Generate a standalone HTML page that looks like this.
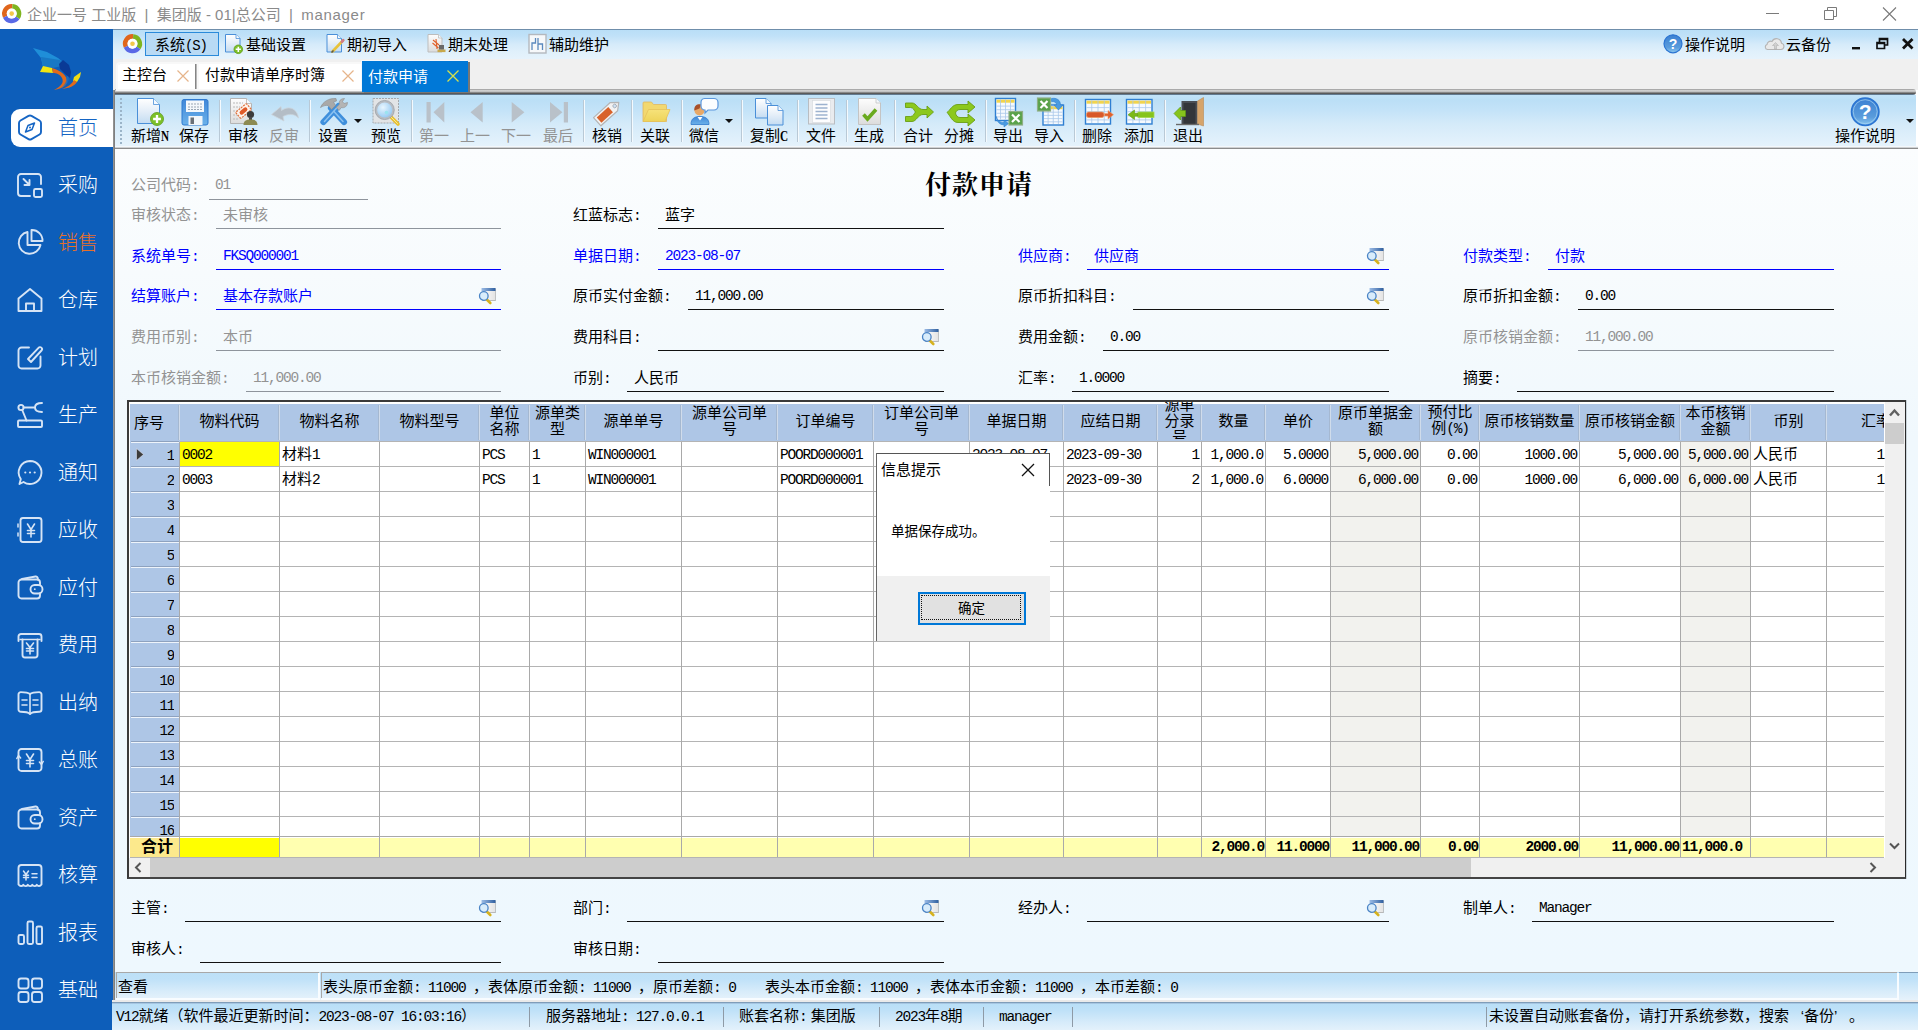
<!DOCTYPE html><html lang="zh-CN"><head><meta charset="utf-8"><title>付款申请</title><style>
html,body{margin:0;padding:0}
body{width:1918px;height:1030px;position:relative;overflow:hidden;background:#fff;font-family:"Liberation Sans","Noto Sans CJK SC",sans-serif;font-size:15px;color:#000}
.a{position:absolute}
.t{position:absolute;white-space:nowrap;line-height:15px;height:15px}
.n{font-family:"Liberation Mono","Noto Sans CJK SC",monospace;font-size:14.5px;letter-spacing:-1.2px}
.g{color:#939393}
.b{color:#0000ff}
.ul{position:absolute;height:0;border-top:1px solid #111}
.ul.b{border-color:#0000ff}
.ul.g{border-color:#8e949c}
.sb{position:absolute;left:58px;font-size:20px;font-weight:300;line-height:24px;color:#fff;white-space:nowrap}
.hd{position:absolute;top:402px;height:37px;text-align:center;line-height:16px;font-size:15px;overflow:hidden;display:flex;align-items:center;justify-content:center}
.c{position:absolute;white-space:nowrap;line-height:15px;font-size:15px}
.vl{position:absolute;width:1px;background:#a9a9a9}
.hl{position:absolute;height:1px;background:#b4b4b4}
.tl{position:absolute;white-space:nowrap;line-height:15px;top:128px}
.sep{position:absolute;top:100px;width:1px;height:42px;background:#b9c9d6;border-right:1px solid #f4fafe}
</style></head><body><div class="a" style="left:0;top:0;width:1918px;height:30px;background:#fff"></div><svg class="a" style="left:0;top:0" width="30" height="30" viewBox="0 0 30 30"><path d="M5.09 16.68A7.296 7.296 0 0 1 12.34 6.33" stroke="#e0661c" stroke-width="4.608" fill="none"/><path d="M12.34 6.33A7.296 7.296 0 0 1 17.68 17.78" stroke="#7fb51f" stroke-width="4.608" fill="none"/><path d="M17.68 17.78A7.296 7.296 0 0 1 5.09 16.68" stroke="#5a69e6" stroke-width="4.608" fill="none"/><circle cx="11.7" cy="13.6" r="4.992" fill="#fff"/><circle cx="11.7" cy="13.6" r="2.304" fill="#f2c84a"/></svg><div class="t " style="left:27px;top:7px;color:#8a8a8a;font-size:15px;line-height:16px">企业一号 工业版&nbsp; |&nbsp; 集团版 - 01|总公司&nbsp; |&nbsp; <span style="letter-spacing:0.7px">manager</span></div><svg class="a" style="left:1740px;top:0" width="178" height="30" viewBox="1740 0 178 30" fill="none" stroke="#7a7a7a" stroke-width="1"><path d="M1766 13.5H1779"/><path d="M1824.5 10.5H1833.5V19.5H1824.5ZM1827.5 10.5V7.5H1836.5V16.5H1833.5"/><path d="M1883 7.5L1896 20.5M1896 7.5L1883 20.5" stroke-width="1.1"/></svg><div class="a" style="left:0;top:29px;width:113px;height:1001px;background:#0d5eba"></div><div class="a" style="left:113px;top:90px;width:2px;height:911px;background:linear-gradient(90deg,#9a9a9a,#777)"></div><div class="a" style="left:11px;top:109px;width:102px;height:38px;background:#fff;border-radius:9px 0 0 9px"></div><div class="sb" style="top:115.5px;color:#1565c4">首页</div><div class="sb" style="top:173px;color:#fff">采购</div><div class="sb" style="top:230.5px;color:#e8702a">销售</div><div class="sb" style="top:288px;color:#fff">仓库</div><div class="sb" style="top:345.5px;color:#fff">计划</div><div class="sb" style="top:403px;color:#fff">生产</div><div class="sb" style="top:460.5px;color:#fff">通知</div><div class="sb" style="top:518px;color:#fff">应收</div><div class="sb" style="top:575.5px;color:#fff">应付</div><div class="sb" style="top:633px;color:#fff">费用</div><div class="sb" style="top:690.5px;color:#fff">出纳</div><div class="sb" style="top:748px;color:#fff">总账</div><div class="sb" style="top:805.5px;color:#fff">资产</div><div class="sb" style="top:863px;color:#fff">核算</div><div class="sb" style="top:920.5px;color:#fff">报表</div><div class="sb" style="top:978px;color:#fff">基础</div><svg class="a" style="left:0;top:30px" width="113" height="1000" viewBox="0 30 113 1000" fill="none" stroke="#d6e4f5" stroke-width="1.9" stroke-linecap="round" stroke-linejoin="round"><g stroke="none"><path d="M33 48L47 52L58 58L63 62L58 66L53 67L43 67L41 58Z" fill="#1f8ed8"/><path d="M41 57L60 60L66 65L53 68L43 67Z" fill="#1878c4"/><path d="M59 64L63 60L69 65L71 72L70 78L65 74L60 69Z" fill="#0a3a96"/><path d="M43 66L52 68L53 73L40 72Z" fill="#f2e612"/><path d="M52 68C60 70 68 76 67 82C66 87 60 89 54 90C62 86 64 82 62 78C60 74 56 73 53 73Z" fill="#e06a1c"/><path d="M81 72L74 77L73 81L77 82L80 77Z" fill="#f0dc14"/><path d="M74 80L77 82C74 86 70 88 62 89C68 87 72 84 74 80Z" fill="#e06a1c"/><path d="M68 76C70 80 68 85 60 89C66 84 67 80 66 77Z" fill="#1e6ec0" opacity="0.8"/></g><g transform="translate(16,113.5)" stroke="#1565c4"><path d="M12.5 2.4a3 3 0 0 1 3 0l8 4.6a3 3 0 0 1 1.5 2.6v8.8a3 3 0 0 1-1.5 2.6l-8 4.6a3 3 0 0 1-3 0l-8-4.6a3 3 0 0 1-1.5-2.6V9.6a3 3 0 0 1 1.5-2.6Z"/><path d="M9.5 18.5L12 12L18.5 9.5L16 16Z" stroke-width="1.5"/><circle cx="14" cy="14" r="1" fill="#1565c4" stroke="none"/></g><g transform="translate(16,171)"><path d="M25 13V6a3 3 0 0 0-3-3H5a3 3 0 0 0-3 3v16a3 3 0 0 0 3 3h9"/><rect x="18" y="18" width="8" height="8" rx="1.5"/><path d="M7.5 8L13.5 14M13.5 9V14H8.5"/></g><g transform="translate(16,228.5)"><path d="M11.5 3.5A11 11 0 1 0 24.5 16.5H11.5Z"/><path d="M15.5 1.5A10.5 10.5 0 0 1 26.5 12.5H15.5Z"/></g><g transform="translate(16,286)"><path d="M2.5 12.5L14 3L25.5 12.5V25H2.5Z"/><path d="M10 25V17.5H18V25"/></g><g transform="translate(16,343.5)"><path d="M13 4H5.5a3 3 0 0 0-3 3V22a3 3 0 0 0 3 3H21.5a3 3 0 0 0 3-3V13"/><path d="M12 15.5L22.5 4.3a2 2 0 0 1 3 2.7L15 18.5Z"/></g><g transform="translate(16,401)"><rect x="2" y="19.5" width="24" height="6.5" rx="1"/><circle cx="5" cy="6.5" r="2.6"/><path d="M6.2 9L10.5 19.5M7.6 6.5H18.5M26 2C21.5 2 19 4 19 6.5C19 9 21.5 11 26 11"/></g><g transform="translate(16,458.5)"><path d="M14 2.5a11.5 11.5 0 1 1-6.5 21L3.5 25.5L4.8 20.6A11.5 11.5 0 0 1 14 2.5Z"/><g fill="#d6e4f5" stroke="none"><circle cx="9.3" cy="14" r="1.1"/><circle cx="14" cy="14" r="1.1"/><circle cx="18.7" cy="14" r="1.1"/></g></g><g transform="translate(16,516)"><rect x="4.5" y="2" width="21" height="24" rx="2.5"/><path d="M2 8V11M2 17V20" stroke-width="1.5"/><g transform="translate(1,0)"><path d="M10.5 8L14 13.5L17.5 8M14 13.5V21M10.5 14.5H17.5M10.5 17.5H17.5" stroke-width="1.6"/></g></g><g transform="translate(16,573.5)"><path d="M24 11V9a3 3 0 0 0-3-3H5.5a3 3 0 0 0-3 3V22a3 3 0 0 0 3 3H21a3 3 0 0 0 3-3V20"/><path d="M6 5.5L19.5 3a2 2 0 0 1 2.3 2V6"/><rect x="14.5" y="11.5" width="12" height="8.5" rx="4.2"/><circle cx="18.8" cy="15.7" r="0.9" fill="#d6e4f5" stroke="none"/></g><g transform="translate(16,631)"><path d="M2.5 10V5.5a2.5 2.5 0 0 1 2.5-2.5H23a2.5 2.5 0 0 1 2.5 2.5V10"/><path d="M6.5 8.5V24a2.5 2.5 0 0 0 2.5 2.5H19a2.5 2.5 0 0 0 2.5-2.5V8.5"/><path d="M4 8.5H24" stroke-width="1.4"/><path d="M10.5 12L14 16.5L17.5 12M14 16.5V23M10.5 17.5H17.5M10.5 20H17.5" stroke-width="1.6"/></g><g transform="translate(16,688.5)"><path d="M14 5.5C12 3.8 8 3.6 4.8 3.6A2.3 2.3 0 0 0 2.5 6V21a2.3 2.3 0 0 0 2.3 2.3C8 23.3 12 23.5 14 25.5C16 23.500 20 23.300 23.200 23.300A2.300 2.300 0 0 0 25.500 21V6a2.300 2.300 0 0 0-2.300-2.400C20 3.600 16 3.800 14 5.500Z"/><path d="M14 5.500V25M6 11.500H11M6 16.500H11M17 11.500H22M17 16.500H22" stroke-width="1.600"/></g><g transform="translate(16,746)"><path d="M2.500 11V6a3 3 0 0 1 3-3H22.500a3 3 0 0 1 3 3V19M25.500 17V22a3 3 0 0 1-3 3H5.500a3 3 0 0 1-3-3V9"/><path d="M0.800 12.500L2.500 9.500L4.600 12M23.400 16L25.500 18.500L27.200 15.500" stroke-width="1.500"/><path d="M10.5 8L14 13.5L17.5 8M14 13.5V21M10.5 14.5H17.5M10.5 17.5H17.5" stroke-width="1.6"/></g><g transform="translate(16,803.5)"><path d="M24 11V9a3 3 0 0 0-3-3H5.5a3 3 0 0 0-3 3V22a3 3 0 0 0 3 3H21a3 3 0 0 0 3-3V20"/><path d="M6 5.5L19.5 3a2 2 0 0 1 2.3 2V6"/><rect x="14.5" y="11.5" width="12" height="8.5" rx="4.2"/><circle cx="18.8" cy="15.7" r="0.9" fill="#d6e4f5" stroke="none"/></g><g transform="translate(16,861)"><path d="M2.500 23.500V7a3 3 0 0 1 3-3H22.500a3 3 0 0 1 3 3V23.500C24 25.500 22 25.500 20.800 23.800C19.500 25.500 17.500 25.500 16.300 23.800C15 25.500 13 25.500 11.800 23.800C10.500 25.500 8.500 25.500 7.300 23.800C6 25.500 4 25.500 2.500 23.500Z"/><path d="M7.500 10L10 13.500L12.500 10M10 13.500V19M7.500 14.200H12.500M7.500 16.600H12.500M16 12.800H21M16 16.400H21" stroke-width="1.500"/></g><g transform="translate(16,918.5)"><rect x="2.500" y="16.500" width="5.500" height="9" rx="1.500"/><rect x="11.500" y="3" width="5.500" height="22.500" rx="1.500"/><rect x="20.500" y="8" width="5.500" height="17.500" rx="1.500"/></g><g transform="translate(16,976)"><rect x="2.500" y="2.500" width="10" height="10" rx="2.500"/><rect x="16" y="2.500" width="10" height="10" rx="2.500"/><rect x="2.500" y="16" width="10" height="10" rx="2.500"/><rect x="16" y="16" width="10" height="10" rx="2.500"/></g></svg><div class="a" style="left:113px;top:29px;width:1805px;height:1px;background:#6f8eab"></div><div class="a" style="left:113px;top:30px;width:1805px;height:29px;background:linear-gradient(180deg,#b9def7 0,#c0e1f8 20%,#d6ebfa 50%,#e0f0fb 75%,#e6f3fc 100%)"></div><div class="a" style="left:145px;top:32px;width:72px;height:22px;background:#b8daf5;border:1px solid #2a8ada"></div><div class="t " style="left:155px;top:37px;">系统<span class="n" style="font-size:14px">(S)</span></div><div class="t " style="left:246px;top:37px;">基础设置</div><div class="t " style="left:347px;top:37px;">期初导入</div><div class="t " style="left:448px;top:37px;">期末处理</div><div class="t " style="left:549px;top:37px;">辅助维护</div><div class="t " style="left:1685px;top:37px;">操作说明</div><div class="t " style="left:1786px;top:37px;">云备份</div><svg class="a" style="left:115px;top:30px" width="1803" height="30" viewBox="115 30 1803 30"><path d="M125.89 46.78A7.296 7.296 0 0 1 133.14 36.43" stroke="#e0661c" stroke-width="4.608" fill="none"/><path d="M133.14 36.43A7.296 7.296 0 0 1 138.48 47.88" stroke="#7fb51f" stroke-width="4.608" fill="none"/><path d="M138.48 47.88A7.296 7.296 0 0 1 125.89 46.78" stroke="#5a69e6" stroke-width="4.608" fill="none"/><circle cx="132.5" cy="43.7" r="4.992" fill="#fff"/><circle cx="132.5" cy="43.7" r="2.304" fill="#f2c84a"/><path d="M225.5 34.5H236L240 38.5V52H225.5Z" fill="url(#pg)" stroke="#4a8fd8" stroke-width="1"/><path d="M236 34.5V38.5H240" fill="#f4f9fe" stroke="#4a8fd8" stroke-width="0.8"/><circle cx="238.3" cy="49.3" r="4.3" fill="#7cc028" stroke="#5e9a1a" stroke-width="0.8"/><path d="M235.72 49.3H240.88M238.3 46.72V51.88" stroke="#fff" stroke-width="1.548"/><path d="M327 34.5H337.5L341.5 38.5V52H327Z" fill="url(#pg)" stroke="#4a8fd8" stroke-width="1"/><path d="M337.5 34.5V38.5H341.5" fill="#f4f9fe" stroke="#4a8fd8" stroke-width="0.8"/><path d="M332.500 51.500L343 40.500" stroke="#e8c23a" stroke-width="2.600" stroke-linecap="round"/><path d="M341.800 41.800L343.300 40.200" stroke="#d07a8a" stroke-width="2.600" stroke-linecap="round"/><path d="M331.500 52.500L333.500 50.500" stroke="#555" stroke-width="1.400"/><path d="M428 34.5H438.5L442 38V52H428Z" fill="url(#gy)" stroke="#bdbdbd" stroke-width="1"/><path d="M438.5 34.5V38H442" fill="#f4f9fe" stroke="#bdbdbd" stroke-width="0.8"/><path d="M433 40L439 45M432.500 43L438.500 48M436 39L437 49" stroke="#e0602a" stroke-width="1.100"/><rect x="437.500" y="49.500" width="8" height="2.600" fill="#c8a84a"/><rect x="439" y="45" width="5" height="4.500" fill="#6a6a6a"/><rect x="529" y="34.500" width="17" height="18.500" fill="#f6f8fa" stroke="#b4b8be" stroke-width="1.400"/><path d="M532 50V43H535.500V38M538 50V38M538 44H542.500V50" stroke="#5a88be" stroke-width="1.300" fill="none"/><circle cx="1673" cy="43.800" r="9" fill="url(#hp)" stroke="#2a74d2" stroke-width="1.200"/><text x="1673" y="48.800" text-anchor="middle" font-family="Liberation Sans,sans-serif" font-weight="bold" font-size="14" fill="#fff">?</text><path d="M1767.500 49.500H1781a3.200 3.200 0 0 0 0.500-6.300A5 5 0 0 0 1772 41.500A3.500 3.500 0 0 0 1767 44.500A2.600 2.600 0 0 0 1767.500 49.500Z" fill="#e9e9e9" stroke="#b4b4b4" stroke-width="1.100"/><path d="M1774.500 49V45.500H1772.500L1775.500 42.500L1778.500 45.500H1776.500V49Z" fill="#d0d0d0" stroke="#aaa" stroke-width="0.500"/><rect x="1852" y="47" width="8" height="2.400" fill="#111"/><path d="M1877 42.500H1884.500V48.500H1877ZM1879.500 42.500V38.500H1887.500V45H1884.500" fill="none" stroke="#111" stroke-width="1.700"/><path d="M1879.500 39.200H1887.500M1877 43.200H1884.500" stroke="#111" stroke-width="2.200"/><path d="M1903 39L1912.500 48.500M1912.500 39L1903 48.500" stroke="#111" stroke-width="2.800"/></svg><div class="a" style="left:113px;top:59px;width:1805px;height:31px;background:#f0f0f0"></div><div class="a" style="left:115px;top:89px;width:1801px;height:6px;border-radius:0 3px 3px 0;background:linear-gradient(180deg,#aaa 0,#aaa 16%,#d2d2d2 17%,#c8c8c8 40%,#8a8a8a 58%,#5a5a5a 75%,#5c6e7e 84%,#6a87a2 100%)"></div><div class="a" style="left:118px;top:64px;width:77px;height:25px;background:#fff;box-shadow:1px 0 0 #858585,2px 0 0 #b8b8b8,0 0 0 2px #f8f8f8;border-radius:2px 0 0 0"></div><div class="a" style="left:199px;top:64px;width:162px;height:25px;background:#fff;box-shadow:0 0 0 2px #f8f8f8"></div><div class="a" style="left:362px;top:61px;width:106px;height:31px;background:#0078d7;box-shadow:2px 1px 0 #777,-1px -1px 0 #f4f8fc"></div><div class="t " style="left:122px;top:67px;">主控台</div><div class="t " style="left:205px;top:67px;">付款申请单序时簿</div><div class="t " style="left:368px;top:68.5px;color:#fff">付款申请</div><svg class="a" style="left:177px;top:70px" width="12" height="12" viewBox="0 0 12 12"><path d="M0.5 0.5L11.5 11.5M11.5 0.5L0.5 11.5" stroke="#e6b48a" stroke-width="1.2" fill="none"/></svg><svg class="a" style="left:342px;top:70px" width="12" height="12" viewBox="0 0 12 12"><path d="M0.5 0.5L11.5 11.5M11.5 0.5L0.5 11.5" stroke="#e6b48a" stroke-width="1.2" fill="none"/></svg><svg class="a" style="left:447px;top:70px" width="12" height="12" viewBox="0 0 12 12"><path d="M0.5 0.5L11.5 11.5M11.5 0.5L0.5 11.5" stroke="#d6e24a" stroke-width="1.3" fill="none"/></svg><div class="a" style="left:115px;top:95px;width:1801px;height:52px;background:linear-gradient(180deg,#c2e3f8 0,#bbdff6 10%,#c4e3f8 30%,#d4eaf9 55%,#e6f3fc 100%)"></div><div class="a" style="left:115px;top:146px;width:1803px;height:3px;background:linear-gradient(180deg,#f4f8fb 0,#f4f8fb 40%,#8c8c8c 67%,#8c8c8c 100%)"></div><div class="a" style="left:120px;top:98px;width:2px;height:46px;background:repeating-linear-gradient(180deg,#9bb4c8 0 2px,transparent 2px 4px)"></div><div class="tl" style="left:131px">新增<span style="font-family:\'Liberation Serif\',serif;font-weight:bold;font-size:14px;display:inline-block;transform:scaleX(0.8);transform-origin:left;margin-right:-3px">N</span></div><div class="tl" style="left:179px">保存</div><div class="tl" style="left:228px">审核</div><div class="tl g" style="left:269px">反审</div><div class="tl" style="left:318px">设置</div><div class="tl" style="left:371px">预览</div><div class="tl g" style="left:419px">第一</div><div class="tl g" style="left:460px">上一</div><div class="tl g" style="left:501px">下一</div><div class="tl g" style="left:543px">最后</div><div class="tl" style="left:592px">核销</div><div class="tl" style="left:640px">关联</div><div class="tl" style="left:689px">微信</div><div class="tl" style="left:750px">复制<span style="font-family:\'Liberation Serif\',serif;font-weight:bold;font-size:14px;display:inline-block;transform:scaleX(0.8);transform-origin:left;margin-right:-3px">C</span></div><div class="tl" style="left:806px">文件</div><div class="tl" style="left:854px">生成</div><div class="tl" style="left:903px">合计</div><div class="tl" style="left:944px">分摊</div><div class="tl" style="left:993px">导出</div><div class="tl" style="left:1034px">导入</div><div class="tl" style="left:1082px">删除</div><div class="tl" style="left:1124px">添加</div><div class="tl" style="left:1173px">退出</div><div class="tl" style="left:1835px">操作说明</div><div class="sep" style="left:219px"></div><div class="sep" style="left:309px"></div><div class="sep" style="left:411px"></div><div class="sep" style="left:583px"></div><div class="sep" style="left:631px"></div><div class="sep" style="left:681px"></div><div class="sep" style="left:741px"></div><div class="sep" style="left:797px"></div><div class="sep" style="left:846px"></div><div class="sep" style="left:894px"></div><div class="sep" style="left:985px"></div><div class="sep" style="left:1074px"></div><div class="sep" style="left:1164px"></div><svg class="a" style="left:354px;top:119px" width="8" height="4" viewBox="0 0 8 4"><path d="M0 0H8L4 4Z" fill="#111"/></svg><svg class="a" style="left:725px;top:119px" width="8" height="4" viewBox="0 0 8 4"><path d="M0 0H8L4 4Z" fill="#111"/></svg><svg class="a" style="left:1906px;top:119px" width="8" height="4" viewBox="0 0 8 4"><path d="M0 0H8L4 4Z" fill="#111"/></svg><svg class="a" style="left:115px;top:92px" width="1803" height="56" viewBox="115 92 1803 56"><defs>
<linearGradient id="pg" x1="0" y1="0" x2="0" y2="1"><stop offset="0" stop-color="#ffffff"/><stop offset="0.5" stop-color="#e4eef8"/><stop offset="1" stop-color="#c4dcf2"/></linearGradient>
<linearGradient id="gy" x1="0" y1="0" x2="0" y2="1"><stop offset="0" stop-color="#fdfdfd"/><stop offset="1" stop-color="#dcdcdc"/></linearGradient>
<linearGradient id="bl" x1="0" y1="0" x2="0" y2="1"><stop offset="0" stop-color="#3f86d8"/><stop offset="1" stop-color="#6cb2ea"/></linearGradient>
<linearGradient id="hp" x1="0" y1="0" x2="0" y2="1"><stop offset="0" stop-color="#3a80d2"/><stop offset="0.7" stop-color="#5a9cdc"/><stop offset="1" stop-color="#8cc8f0"/></linearGradient>
<linearGradient id="fo" x1="0" y1="0" x2="0" y2="1"><stop offset="0" stop-color="#f6e27a"/><stop offset="1" stop-color="#eed45a"/></linearGradient>
<radialGradient id="ln" cx="0.4" cy="0.35" r="0.7"><stop offset="0" stop-color="#e8f6ff"/><stop offset="1" stop-color="#8cc4f0"/></radialGradient>
</defs><path d="M137.5 98.5H153.5L159.5 104.5V123.5H137.5Z" fill="url(#pg)" stroke="#4a8fd8" stroke-width="1"/><path d="M153.5 98.5V104.5H159.5" fill="#f4f9fe" stroke="#4a8fd8" stroke-width="0.8"/><circle cx="157" cy="119" r="6.5" fill="#7cc028" stroke="#5e9a1a" stroke-width="0.8"/><path d="M153.1 119H160.9M157 115.1V122.9" stroke="#fff" stroke-width="2.34"/><rect x="182" y="99.500" width="26" height="25.500" rx="2" fill="url(#bl)" stroke="#2f7ad0" stroke-width="1"/><rect x="186" y="100.500" width="18" height="11.500" fill="#f4f8fc"/><path d="M188 104H202M188 107H202M188 109.500H202" stroke="#9aa6b4" stroke-width="1" stroke-dasharray="2 1"/><rect x="188.500" y="116" width="14" height="9" fill="#f2f6fa"/><rect x="190.500" y="117.500" width="3.500" height="6.500" fill="#6a7077"/><path d="M230.5 98.5H246.5L251.5 103.5V123.5H230.5Z" fill="url(#gy)" stroke="#b4b4b4" stroke-width="1"/><path d="M246.5 98.5V103.5H251.5" fill="#f4f9fe" stroke="#b4b4b4" stroke-width="0.8"/><path d="M233 103H243M233 107H240M233 111H238M233 115H238M233 119H238" stroke="#b9b9b9" stroke-width="1" stroke-dasharray="2 1"/><g transform="rotate(-40 243.500 111)"><rect x="236.500" y="107" width="14" height="8" rx="1" fill="#fff4ec" stroke="#e0703a" stroke-width="1.200" stroke-dasharray="2 1"/><rect x="239" y="109" width="9" height="4" rx="2" fill="#e05a28"/></g><circle cx="250.500" cy="114.500" r="3.600" fill="#3c3c3c"/><path d="M249 117H252V120H249Z" fill="#4a4a4a"/><path d="M243.500 125C243.500 121 246 119.500 250.500 119.500C255 119.500 257.500 121 257.500 125Z" fill="#8c8a52"/><path d="M271.500 114.500L281 106.500L281.500 110.500C288 105.500 297 107.500 298.500 118C294.500 113.500 288.500 113.500 283 116.500L284 121Z" fill="#b4bdc6" stroke="#ccd4dc" stroke-width="0.800"/><path d="M323.500 122L338.500 106" stroke="#3f8fdc" stroke-width="6.200" stroke-linecap="round"/><path d="M344 122L331 108" stroke="#3f8fdc" stroke-width="6.200" stroke-linecap="round"/><path d="M324.500 121.500L338 106.500" stroke="#8cc2f0" stroke-width="1.500" stroke-linecap="round"/><path d="M343 121.500L334 111.500" stroke="#8cc2f0" stroke-width="1.500" stroke-linecap="round"/><path d="M320.500 107.500C323 101.500 329 98 336 98.500L336.500 101L333.500 102L335.500 105.500L331.500 109.500L328 105.500C325.500 105 323 106 320.500 107.500Z" fill="#a9a9a9" stroke="#8a8a8a" stroke-width="0.600"/><path d="M336.500 107.500L339.500 104C338.500 101.500 340.500 98.500 344.500 98.500L342.500 101.500L344 103.500L347.500 102.500C347.500 106 344.500 108.500 341.500 107.500L339 110.500Z" fill="#b4b4b4" stroke="#8f8f8f" stroke-width="0.600"/><rect x="373" y="98.500" width="25.500" height="24.500" fill="#e2e4e6" stroke="#a4a8ac" stroke-width="1" stroke-dasharray="2 1"/><path d="M391 117L398 124" stroke="#e8c030" stroke-width="3.600" stroke-linecap="round"/><path d="M391 117L397.500 123.500" stroke="#f8e890" stroke-width="1" stroke-linecap="round"/><circle cx="384.700" cy="110" r="8.600" fill="url(#ln)" stroke="#b8bcc2" stroke-width="2"/><circle cx="384.700" cy="110" r="9.600" fill="none" stroke="#8c9298" stroke-width="0.600"/><circle cx="386.500" cy="112.500" r="1.800" fill="#9ae4f0"/><rect x="426.500" y="102" width="4.200" height="20.500" fill="#b9c1c9"/><path d="M444.300 102V122.500L433.500 112.200Z" fill="#b9c1c9"/><path d="M482.700 102V122.500L470.500 112.200Z" fill="#b9c1c9"/><path d="M511.700 102V122.500L524.400 112.200Z" fill="#b9c1c9"/><path d="M550 102V122.500L562.400 112.200Z" fill="#b9c1c9"/><rect x="563.800" y="102" width="4.200" height="20.500" fill="#b9c1c9"/><g transform="rotate(-42 608 112)"><path d="M593.500 106.500H616L622.500 112L616 117.500H593.500Z" fill="#f2f2f2" stroke="#b4b4b4" stroke-width="1.200" stroke-linejoin="round"/><rect x="596" y="108.500" width="15.500" height="7" fill="#d8622a"/><circle cx="617" cy="112" r="1.800" fill="#cfe2f4" stroke="#a0a8b0" stroke-width="0.800"/></g><path d="M643 121.500V103a1 1 0 0 1 1-1H651.500L653.500 104.500H665.500a1 1 0 0 1 1 1V121.500Z" fill="#f2d870" stroke="#e0b860" stroke-width="0.800"/><path d="M643 121.500L648.500 109.500H670L665 121.500Z" fill="url(#fo)" stroke="#e6c25a" stroke-width="0.800"/><path d="M691 124.500C691 118.500 694.500 116.500 700 116.500C705.500 116.500 709 118.500 709 124.500Z" fill="url(#bl)" stroke="#2f78cc" stroke-width="0.800"/><path d="M697.500 117L700 120.500L702.500 117Z" fill="#fff"/><circle cx="699.500" cy="110.500" r="5" fill="#e8a868"/><path d="M694.300 110.500C693.800 105.500 697.500 103.800 701 104.500L699.500 108.500Z" fill="#a8502a"/><path d="M704.500 98.500H714a4 4 0 0 1 4 4V106a4 4 0 0 1-4 4H708L705 113V110a4 4 0 0 1-4-4V102.500a4 4 0 0 1 3.500-4Z" fill="#fbfdff" stroke="#5a96dc" stroke-width="1.200"/><path d="M755.5 98.5H766L771 103.5V118H755.5Z" fill="url(#pg)" stroke="#4a8fd8" stroke-width="1"/><path d="M766 98.5V103.5H771" fill="#f4f9fe" stroke="#4a8fd8" stroke-width="0.8"/><path d="M767.5 105.5H778L783 110.5V125H767.5Z" fill="url(#pg)" stroke="#4a8fd8" stroke-width="1"/><path d="M778 105.5V110.5H783" fill="#f4f9fe" stroke="#4a8fd8" stroke-width="0.8"/><rect x="808.500" y="98.500" width="26" height="25.500" fill="#e9ebee" stroke="#b9bdc2" stroke-width="1"/><rect x="812.500" y="100.500" width="18" height="22" fill="#fdfdfe" stroke="#d4d8dc" stroke-width="0.600"/><path d="M815.500 104.500H827.500M815.500 108H827.500M815.500 111.500H827.500M815.500 115H827.500M815.500 118.500H827.500" stroke="#9db2cf" stroke-width="1.300"/><path d="M858.5 98.5H876L880.5 103V124.5H858.5Z" fill="url(#gy)" stroke="#c4c4c4" stroke-width="1"/><path d="M876 98.5V103H880.5" fill="#f4f9fe" stroke="#c4c4c4" stroke-width="0.8"/><path d="M863.500 114.500L867.500 119L876 109.500" stroke="#6aaa1e" stroke-width="3.600" fill="none"/><path d="M905.500 103H912C916.500 103 918 109.500 923 109.500H927V106L933.500 112L927 118V114.500H923C918 114.500 916.500 121.500 912 121.500H905.500V116.500H910.500C913.500 116.500 914 113.500 915.500 112C914 110.500 913.500 107.500 910.500 107.500H905.500Z" fill="#8cc81e" stroke="#6a9e14" stroke-width="0.900" stroke-linejoin="round"/><path d="M947 112.500C950 110.500 952 104.500 958 104.500H968V101L975 107L968 113V109.500H960C957 109.500 956 111.500 955.500 113C956 115 957 117.500 960 117.500H968V114L975 120L968 126V122.500H958C952 122.500 950 115 947 112.500Z" fill="#8cc81e" stroke="#6a9e14" stroke-width="0.900" stroke-linejoin="round"/><rect x="995.5" y="98.5" width="20" height="22" fill="#f6fafe" stroke="#2f7fd2" stroke-width="1.4"/><rect x="996.5" y="99.7" width="18" height="3" fill="#f2d44e"/><path d="M1000.5 99.5V119.5" stroke="#a9c8ea" stroke-width="0.8"/><path d="M1005.5 99.5V119.5" stroke="#a9c8ea" stroke-width="0.8"/><path d="M1010.5 99.5V119.5" stroke="#a9c8ea" stroke-width="0.8"/><path d="M996.5 106.1H1014.5" stroke="#a9c8ea" stroke-width="0.8"/><path d="M996.5 109.7H1014.5" stroke="#a9c8ea" stroke-width="0.8"/><path d="M996.5 113.3H1014.5" stroke="#a9c8ea" stroke-width="0.8"/><path d="M996.5 116.9H1014.5" stroke="#a9c8ea" stroke-width="0.8"/><path d="M996.500 116.500C997 120.500 1000 122.500 1004 122.500V120L1008.500 123.500L1004 127V124.800C999.500 124.800 996.500 121.500 996.500 116.500Z" fill="#4a9ae0" stroke="#2f7fd0" stroke-width="0.600"/><rect x="1009" y="111.5" width="13.5" height="13.5" fill="#5aa24a" stroke="#8fae86" stroke-width="1.2"/><path d="M1012 114.5L1019.5 122M1019.5 114.5L1012 122" stroke="#fff" stroke-width="2.2"/><rect x="1043" y="105" width="20.5" height="20" fill="#f6fafe" stroke="#2f7fd2" stroke-width="1.4"/><rect x="1044" y="106.2" width="18.5" height="3" fill="#f2d44e"/><path d="M1048.12 106V124" stroke="#a9c8ea" stroke-width="0.8"/><path d="M1053.25 106V124" stroke="#a9c8ea" stroke-width="0.8"/><path d="M1058.38 106V124" stroke="#a9c8ea" stroke-width="0.8"/><path d="M1044 112.2H1062.5" stroke="#a9c8ea" stroke-width="0.8"/><path d="M1044 115.4H1062.5" stroke="#a9c8ea" stroke-width="0.8"/><path d="M1044 118.6H1062.5" stroke="#a9c8ea" stroke-width="0.8"/><path d="M1044 121.8H1062.5" stroke="#a9c8ea" stroke-width="0.8"/><rect x="1037.5" y="98" width="13" height="13" fill="#5aa24a" stroke="#8fae86" stroke-width="1.2"/><path d="M1040.5 101L1047.5 108M1047.5 101L1040.5 108" stroke="#fff" stroke-width="2.2"/><path d="M1051.500 98.500C1056.500 97.500 1060.500 100 1060.500 105H1063L1058.500 110L1054 105H1056.500C1056.500 102.500 1054.500 101 1051.500 101.500Z" fill="#4a9ae0" stroke="#2f7fd0" stroke-width="0.600"/><rect x="1085.5" y="99.5" width="25" height="24.5" fill="#f6fafe" stroke="#2f7fd2" stroke-width="1.4"/><rect x="1086.5" y="100.7" width="23" height="3" fill="#f2d44e"/><path d="M1091.75 100.5V123" stroke="#a9c8ea" stroke-width="0.8"/><path d="M1098 100.5V123" stroke="#a9c8ea" stroke-width="0.8"/><path d="M1104.25 100.5V123" stroke="#a9c8ea" stroke-width="0.8"/><path d="M1086.5 107.6H1109.5" stroke="#a9c8ea" stroke-width="0.8"/><path d="M1086.5 111.7H1109.5" stroke="#a9c8ea" stroke-width="0.8"/><path d="M1086.5 115.8H1109.5" stroke="#a9c8ea" stroke-width="0.8"/><path d="M1086.5 119.9H1109.5" stroke="#a9c8ea" stroke-width="0.8"/><rect x="1086.500" y="112" width="17.500" height="5.500" rx="2" fill="#d8582a" stroke="#e89a6a" stroke-width="0.800"/><path d="M1104.500 113.500H1108V110.500L1113.500 114.700L1108 119V116H1104.500Z" fill="#e0602c" stroke="#f0a070" stroke-width="0.600"/><rect x="1126.5" y="99.5" width="25.5" height="24.5" fill="#f6fafe" stroke="#2f7fd2" stroke-width="1.4"/><rect x="1127.5" y="100.7" width="23.5" height="3" fill="#f2d44e"/><path d="M1132.88 100.5V123" stroke="#a9c8ea" stroke-width="0.8"/><path d="M1139.25 100.5V123" stroke="#a9c8ea" stroke-width="0.8"/><path d="M1145.62 100.5V123" stroke="#a9c8ea" stroke-width="0.8"/><path d="M1127.5 107.6H1151" stroke="#a9c8ea" stroke-width="0.8"/><path d="M1127.5 111.7H1151" stroke="#a9c8ea" stroke-width="0.8"/><path d="M1127.5 115.8H1151" stroke="#a9c8ea" stroke-width="0.8"/><path d="M1127.5 119.9H1151" stroke="#a9c8ea" stroke-width="0.8"/><rect x="1138" y="112" width="16" height="5.500" fill="#86c41c" stroke="#a6d850" stroke-width="0.800"/><path d="M1138 113.300H1134.500V110L1128 114.700L1134.500 119.500V116.200H1138Z" fill="#7cba18" stroke="#5e9a14" stroke-width="0.600"/><rect x="1181.500" y="101" width="16" height="23" fill="#4a4e54"/><rect x="1183.500" y="103" width="12" height="21" fill="#33363a"/><path d="M1197.500 101L1203.500 97.500V126L1197.500 124Z" fill="#d6a46a" stroke="#b88a56" stroke-width="0.600"/><path d="M1176 124.500H1199" stroke="#6a6a6a" stroke-width="1.400"/><path d="M1174 113.500L1180.500 107V110.500H1185.500V116.500H1180.500V120Z" fill="#86c41c" stroke="#5e9a14" stroke-width="0.700"/><circle cx="1865.200" cy="111.700" r="13.700" fill="url(#hp)" stroke="#2a74d2" stroke-width="1.600"/><circle cx="1865.200" cy="111.700" r="12" fill="none" stroke="#a8d4f4" stroke-width="0.700"/><text x="1865.200" y="119.200" text-anchor="middle" font-family="Liberation Sans,sans-serif" font-weight="bold" font-size="21" fill="#fff">?</text></svg><div class="a" style="left:115px;top:149px;width:1803px;height:824px;background:linear-gradient(180deg,#fbfdfe 0,#f7fbfd 15%,#f0f8fd 35%,#eef8fe 100%)"></div><div class="t" style="left:925px;top:172px;font-family:'Liberation Serif','Noto Serif CJK SC',serif;font-weight:bold;font-size:26px;line-height:28px;height:28px;letter-spacing:1px">付款申请</div><svg width="0" height="0" style="position:absolute"><defs><linearGradient id="lkt" x1="0" y1="0" x2="1" y2="0"><stop offset="0" stop-color="#9cbce6"/><stop offset="1" stop-color="#2f5f9f"/></linearGradient><linearGradient id="lkb" x1="0" y1="0" x2="1" y2="0"><stop offset="0" stop-color="#ffffff"/><stop offset="1" stop-color="#e4e4e4"/></linearGradient></defs></svg><div class="t g" style="left:131px;top:177px;">公司代码<span class="n">:</span></div><div class="t g" style="left:215px;top:176px;"><span class="n">01</span></div><div class="ul g" style="left:209px;top:199px;width:159px"></div><div class="t g" style="left:131px;top:207px;">审核状态<span class="n">:</span></div><div class="t g" style="left:223px;top:207px;">未审核</div><div class="ul g" style="left:216px;top:228px;width:285px"></div><div class="t b" style="left:131px;top:248px;">系统单号<span class="n">:</span></div><div class="t b" style="left:223px;top:247px;"><span class="n">FKSQ000001</span></div><div class="ul b" style="left:216px;top:269px;width:285px"></div><div class="t b" style="left:131px;top:288px;">结算账户<span class="n">:</span></div><div class="t b" style="left:223px;top:288px;">基本存款账户</div><div class="ul b" style="left:216px;top:309px;width:285px"></div><svg class="a lk" style="left:478px;top:287px" width="20" height="18" viewBox="0 0 20 18"><rect x="4" y="1.500" width="13.500" height="12.500" fill="#8a8a8a"/><rect x="3.500" y="1" width="13.500" height="12.500" fill="url(#lkb)"/><rect x="3.500" y="1" width="14" height="3" fill="url(#lkt)"/><path d="M9 12.800L12.300 16" stroke="#d6b21e" stroke-width="2.600" stroke-linecap="round"/><circle cx="5.800" cy="9" r="4.300" fill="#d8ecfb" stroke="#4a84c6" stroke-width="1.300"/></svg><div class="t g" style="left:131px;top:329px;">费用币别<span class="n">:</span></div><div class="t g" style="left:223px;top:329px;">本币</div><div class="ul g" style="left:216px;top:350px;width:285px"></div><div class="t g" style="left:131px;top:370px;">本币核销金额<span class="n">:</span></div><div class="t g" style="left:253px;top:369px;"><span class="n">11,000.00</span></div><div class="ul g" style="left:246px;top:391px;width:255px"></div><div class="t " style="left:573px;top:207px;">红蓝标志<span class="n">:</span></div><div class="t " style="left:665px;top:207px;">蓝字</div><div class="ul " style="left:658px;top:228px;width:286px"></div><div class="t b" style="left:573px;top:248px;">单据日期<span class="n">:</span></div><div class="t b" style="left:665px;top:247px;"><span class="n">2023-08-07</span></div><div class="ul b" style="left:658px;top:269px;width:286px"></div><div class="t " style="left:573px;top:288px;">原币实付金额<span class="n">:</span></div><div class="t " style="left:695px;top:287px;"><span class="n">11,000.00</span></div><div class="ul " style="left:688px;top:309px;width:256px"></div><div class="t " style="left:573px;top:329px;">费用科目<span class="n">:</span></div><div class="ul " style="left:658px;top:350px;width:286px"></div><svg class="a lk" style="left:921px;top:328px" width="20" height="18" viewBox="0 0 20 18"><rect x="4" y="1.500" width="13.500" height="12.500" fill="#8a8a8a"/><rect x="3.500" y="1" width="13.500" height="12.500" fill="url(#lkb)"/><rect x="3.500" y="1" width="14" height="3" fill="url(#lkt)"/><path d="M9 12.800L12.300 16" stroke="#d6b21e" stroke-width="2.600" stroke-linecap="round"/><circle cx="5.800" cy="9" r="4.300" fill="#d8ecfb" stroke="#4a84c6" stroke-width="1.300"/></svg><div class="t " style="left:573px;top:370px;">币别<span class="n">:</span></div><div class="t " style="left:634px;top:370px;">人民币</div><div class="ul " style="left:627px;top:391px;width:317px"></div><div class="t b" style="left:1018px;top:248px;">供应商<span class="n">:</span></div><div class="t b" style="left:1094px;top:248px;">供应商</div><div class="ul b" style="left:1087px;top:269px;width:302px"></div><svg class="a lk" style="left:1366px;top:247px" width="20" height="18" viewBox="0 0 20 18"><rect x="4" y="1.500" width="13.500" height="12.500" fill="#8a8a8a"/><rect x="3.500" y="1" width="13.500" height="12.500" fill="url(#lkb)"/><rect x="3.500" y="1" width="14" height="3" fill="url(#lkt)"/><path d="M9 12.800L12.300 16" stroke="#d6b21e" stroke-width="2.600" stroke-linecap="round"/><circle cx="5.800" cy="9" r="4.300" fill="#d8ecfb" stroke="#4a84c6" stroke-width="1.300"/></svg><div class="t " style="left:1018px;top:288px;">原币折扣科目<span class="n">:</span></div><div class="ul " style="left:1133px;top:309px;width:256px"></div><svg class="a lk" style="left:1366px;top:287px" width="20" height="18" viewBox="0 0 20 18"><rect x="4" y="1.500" width="13.500" height="12.500" fill="#8a8a8a"/><rect x="3.500" y="1" width="13.500" height="12.500" fill="url(#lkb)"/><rect x="3.500" y="1" width="14" height="3" fill="url(#lkt)"/><path d="M9 12.800L12.300 16" stroke="#d6b21e" stroke-width="2.600" stroke-linecap="round"/><circle cx="5.800" cy="9" r="4.300" fill="#d8ecfb" stroke="#4a84c6" stroke-width="1.300"/></svg><div class="t " style="left:1018px;top:329px;">费用金额<span class="n">:</span></div><div class="t " style="left:1110px;top:328px;"><span class="n">0.00</span></div><div class="ul " style="left:1103px;top:350px;width:286px"></div><div class="t " style="left:1018px;top:370px;">汇率<span class="n">:</span></div><div class="t " style="left:1079px;top:369px;"><span class="n">1.0000</span></div><div class="ul " style="left:1072px;top:391px;width:317px"></div><div class="t b" style="left:1463px;top:248px;">付款类型<span class="n">:</span></div><div class="t b" style="left:1555px;top:248px;">付款</div><div class="ul b" style="left:1548px;top:269px;width:286px"></div><div class="t " style="left:1463px;top:288px;">原币折扣金额<span class="n">:</span></div><div class="t " style="left:1585px;top:287px;"><span class="n">0.00</span></div><div class="ul " style="left:1578px;top:309px;width:256px"></div><div class="t g" style="left:1463px;top:329px;">原币核销金额<span class="n">:</span></div><div class="t g" style="left:1585px;top:328px;"><span class="n">11,000.00</span></div><div class="ul g" style="left:1578px;top:350px;width:256px"></div><div class="t " style="left:1463px;top:370px;">摘要<span class="n">:</span></div><div class="ul " style="left:1517px;top:391px;width:317px"></div><div class="t " style="left:131px;top:900px;">主管<span class="n">:</span></div><div class="ul " style="left:185px;top:921px;width:316px"></div><svg class="a lk" style="left:478px;top:899px" width="20" height="18" viewBox="0 0 20 18"><rect x="4" y="1.500" width="13.500" height="12.500" fill="#8a8a8a"/><rect x="3.500" y="1" width="13.500" height="12.500" fill="url(#lkb)"/><rect x="3.500" y="1" width="14" height="3" fill="url(#lkt)"/><path d="M9 12.800L12.300 16" stroke="#d6b21e" stroke-width="2.600" stroke-linecap="round"/><circle cx="5.800" cy="9" r="4.300" fill="#d8ecfb" stroke="#4a84c6" stroke-width="1.300"/></svg><div class="t " style="left:573px;top:900px;">部门<span class="n">:</span></div><div class="ul " style="left:627px;top:921px;width:317px"></div><svg class="a lk" style="left:921px;top:899px" width="20" height="18" viewBox="0 0 20 18"><rect x="4" y="1.500" width="13.500" height="12.500" fill="#8a8a8a"/><rect x="3.500" y="1" width="13.500" height="12.500" fill="url(#lkb)"/><rect x="3.500" y="1" width="14" height="3" fill="url(#lkt)"/><path d="M9 12.800L12.300 16" stroke="#d6b21e" stroke-width="2.600" stroke-linecap="round"/><circle cx="5.800" cy="9" r="4.300" fill="#d8ecfb" stroke="#4a84c6" stroke-width="1.300"/></svg><div class="t " style="left:1018px;top:900px;">经办人<span class="n">:</span></div><div class="ul " style="left:1087px;top:921px;width:302px"></div><svg class="a lk" style="left:1366px;top:899px" width="20" height="18" viewBox="0 0 20 18"><rect x="4" y="1.500" width="13.500" height="12.500" fill="#8a8a8a"/><rect x="3.500" y="1" width="13.500" height="12.500" fill="url(#lkb)"/><rect x="3.500" y="1" width="14" height="3" fill="url(#lkt)"/><path d="M9 12.800L12.300 16" stroke="#d6b21e" stroke-width="2.600" stroke-linecap="round"/><circle cx="5.800" cy="9" r="4.300" fill="#d8ecfb" stroke="#4a84c6" stroke-width="1.300"/></svg><div class="t " style="left:1463px;top:900px;">制单人<span class="n">:</span></div><div class="t " style="left:1539px;top:899px;"><span class="n">Manager</span></div><div class="ul " style="left:1532px;top:921px;width:302px"></div><div class="t " style="left:131px;top:941px;">审核人<span class="n">:</span></div><div class="ul " style="left:200px;top:962px;width:301px"></div><div class="t " style="left:573px;top:941px;">审核日期<span class="n">:</span></div><div class="ul " style="left:658px;top:962px;width:286px"></div><div class="a" style="left:127px;top:400px;width:1776px;height:475px;background:#fff;border:2px solid #3a3a3a;border-right:2px solid #2a2a2a;border-bottom-color:#444;box-sizing:content-box"></div><div class="a" style="left:1906px;top:400px;width:1px;height:479px;background:#c9d3da"></div><div class="a" style="left:130px;top:404px;width:1754px;height:37px;background:#aec6e6"></div><div class="a" style="left:130px;top:441px;width:50px;height:395px;background:#aec6e6"></div><div class="a" style="left:1331px;top:442px;width:90px;height:395px;background:#f2f2ee"></div><div class="a" style="left:1681px;top:442px;width:70px;height:395px;background:#f2f2ee"></div><div class="a" style="left:180px;top:442px;width:100px;height:25px;background:#ffff00"></div><div class="hl" style="left:180px;top:441px;width:1704px"></div><div class="a" style="left:131px;top:441px;width:48px;height:2px;background:linear-gradient(180deg,#8ea2bf 0,#8ea2bf 50%,#eef4fb 51%,#eef4fb 100%)"></div><div class="hl" style="left:180px;top:466px;width:1704px"></div><div class="a" style="left:131px;top:466px;width:48px;height:2px;background:linear-gradient(180deg,#8ea2bf 0,#8ea2bf 50%,#eef4fb 51%,#eef4fb 100%)"></div><div class="hl" style="left:180px;top:491px;width:1704px"></div><div class="a" style="left:131px;top:491px;width:48px;height:2px;background:linear-gradient(180deg,#8ea2bf 0,#8ea2bf 50%,#eef4fb 51%,#eef4fb 100%)"></div><div class="hl" style="left:180px;top:516px;width:1704px"></div><div class="a" style="left:131px;top:516px;width:48px;height:2px;background:linear-gradient(180deg,#8ea2bf 0,#8ea2bf 50%,#eef4fb 51%,#eef4fb 100%)"></div><div class="hl" style="left:180px;top:541px;width:1704px"></div><div class="a" style="left:131px;top:541px;width:48px;height:2px;background:linear-gradient(180deg,#8ea2bf 0,#8ea2bf 50%,#eef4fb 51%,#eef4fb 100%)"></div><div class="hl" style="left:180px;top:566px;width:1704px"></div><div class="a" style="left:131px;top:566px;width:48px;height:2px;background:linear-gradient(180deg,#8ea2bf 0,#8ea2bf 50%,#eef4fb 51%,#eef4fb 100%)"></div><div class="hl" style="left:180px;top:591px;width:1704px"></div><div class="a" style="left:131px;top:591px;width:48px;height:2px;background:linear-gradient(180deg,#8ea2bf 0,#8ea2bf 50%,#eef4fb 51%,#eef4fb 100%)"></div><div class="hl" style="left:180px;top:616px;width:1704px"></div><div class="a" style="left:131px;top:616px;width:48px;height:2px;background:linear-gradient(180deg,#8ea2bf 0,#8ea2bf 50%,#eef4fb 51%,#eef4fb 100%)"></div><div class="hl" style="left:180px;top:641px;width:1704px"></div><div class="a" style="left:131px;top:641px;width:48px;height:2px;background:linear-gradient(180deg,#8ea2bf 0,#8ea2bf 50%,#eef4fb 51%,#eef4fb 100%)"></div><div class="hl" style="left:180px;top:666px;width:1704px"></div><div class="a" style="left:131px;top:666px;width:48px;height:2px;background:linear-gradient(180deg,#8ea2bf 0,#8ea2bf 50%,#eef4fb 51%,#eef4fb 100%)"></div><div class="hl" style="left:180px;top:691px;width:1704px"></div><div class="a" style="left:131px;top:691px;width:48px;height:2px;background:linear-gradient(180deg,#8ea2bf 0,#8ea2bf 50%,#eef4fb 51%,#eef4fb 100%)"></div><div class="hl" style="left:180px;top:716px;width:1704px"></div><div class="a" style="left:131px;top:716px;width:48px;height:2px;background:linear-gradient(180deg,#8ea2bf 0,#8ea2bf 50%,#eef4fb 51%,#eef4fb 100%)"></div><div class="hl" style="left:180px;top:741px;width:1704px"></div><div class="a" style="left:131px;top:741px;width:48px;height:2px;background:linear-gradient(180deg,#8ea2bf 0,#8ea2bf 50%,#eef4fb 51%,#eef4fb 100%)"></div><div class="hl" style="left:180px;top:766px;width:1704px"></div><div class="a" style="left:131px;top:766px;width:48px;height:2px;background:linear-gradient(180deg,#8ea2bf 0,#8ea2bf 50%,#eef4fb 51%,#eef4fb 100%)"></div><div class="hl" style="left:180px;top:791px;width:1704px"></div><div class="a" style="left:131px;top:791px;width:48px;height:2px;background:linear-gradient(180deg,#8ea2bf 0,#8ea2bf 50%,#eef4fb 51%,#eef4fb 100%)"></div><div class="hl" style="left:180px;top:816px;width:1704px"></div><div class="a" style="left:131px;top:816px;width:48px;height:2px;background:linear-gradient(180deg,#8ea2bf 0,#8ea2bf 50%,#eef4fb 51%,#eef4fb 100%)"></div><div class="vl" style="left:179px;top:442px;height:395px"></div><div class="a" style="left:178px;top:405px;width:2px;height:35px;background:linear-gradient(90deg,#8fa6c4,#e6eef8)"></div><div class="vl" style="left:279px;top:442px;height:395px"></div><div class="a" style="left:278px;top:405px;width:2px;height:35px;background:linear-gradient(90deg,#8fa6c4,#e6eef8)"></div><div class="vl" style="left:379px;top:442px;height:395px"></div><div class="a" style="left:378px;top:405px;width:2px;height:35px;background:linear-gradient(90deg,#8fa6c4,#e6eef8)"></div><div class="vl" style="left:479px;top:442px;height:395px"></div><div class="a" style="left:478px;top:405px;width:2px;height:35px;background:linear-gradient(90deg,#8fa6c4,#e6eef8)"></div><div class="vl" style="left:529px;top:442px;height:395px"></div><div class="a" style="left:528px;top:405px;width:2px;height:35px;background:linear-gradient(90deg,#8fa6c4,#e6eef8)"></div><div class="vl" style="left:585px;top:442px;height:395px"></div><div class="a" style="left:584px;top:405px;width:2px;height:35px;background:linear-gradient(90deg,#8fa6c4,#e6eef8)"></div><div class="vl" style="left:681px;top:442px;height:395px"></div><div class="a" style="left:680px;top:405px;width:2px;height:35px;background:linear-gradient(90deg,#8fa6c4,#e6eef8)"></div><div class="vl" style="left:777px;top:442px;height:395px"></div><div class="a" style="left:776px;top:405px;width:2px;height:35px;background:linear-gradient(90deg,#8fa6c4,#e6eef8)"></div><div class="vl" style="left:873px;top:442px;height:395px"></div><div class="a" style="left:872px;top:405px;width:2px;height:35px;background:linear-gradient(90deg,#8fa6c4,#e6eef8)"></div><div class="vl" style="left:969px;top:442px;height:395px"></div><div class="a" style="left:968px;top:405px;width:2px;height:35px;background:linear-gradient(90deg,#8fa6c4,#e6eef8)"></div><div class="vl" style="left:1063px;top:442px;height:395px"></div><div class="a" style="left:1062px;top:405px;width:2px;height:35px;background:linear-gradient(90deg,#8fa6c4,#e6eef8)"></div><div class="vl" style="left:1157px;top:442px;height:395px"></div><div class="a" style="left:1156px;top:405px;width:2px;height:35px;background:linear-gradient(90deg,#8fa6c4,#e6eef8)"></div><div class="vl" style="left:1201px;top:442px;height:395px"></div><div class="a" style="left:1200px;top:405px;width:2px;height:35px;background:linear-gradient(90deg,#8fa6c4,#e6eef8)"></div><div class="vl" style="left:1265px;top:442px;height:395px"></div><div class="a" style="left:1264px;top:405px;width:2px;height:35px;background:linear-gradient(90deg,#8fa6c4,#e6eef8)"></div><div class="vl" style="left:1330px;top:442px;height:395px"></div><div class="a" style="left:1329px;top:405px;width:2px;height:35px;background:linear-gradient(90deg,#8fa6c4,#e6eef8)"></div><div class="vl" style="left:1420px;top:442px;height:395px"></div><div class="a" style="left:1419px;top:405px;width:2px;height:35px;background:linear-gradient(90deg,#8fa6c4,#e6eef8)"></div><div class="vl" style="left:1479px;top:442px;height:395px"></div><div class="a" style="left:1478px;top:405px;width:2px;height:35px;background:linear-gradient(90deg,#8fa6c4,#e6eef8)"></div><div class="vl" style="left:1579px;top:442px;height:395px"></div><div class="a" style="left:1578px;top:405px;width:2px;height:35px;background:linear-gradient(90deg,#8fa6c4,#e6eef8)"></div><div class="vl" style="left:1680px;top:442px;height:395px"></div><div class="a" style="left:1679px;top:405px;width:2px;height:35px;background:linear-gradient(90deg,#8fa6c4,#e6eef8)"></div><div class="vl" style="left:1750px;top:442px;height:395px"></div><div class="a" style="left:1749px;top:405px;width:2px;height:35px;background:linear-gradient(90deg,#8fa6c4,#e6eef8)"></div><div class="vl" style="left:1826px;top:442px;height:395px"></div><div class="a" style="left:1825px;top:405px;width:2px;height:35px;background:linear-gradient(90deg,#8fa6c4,#e6eef8)"></div><div class="hd" style="left:130px;width:49px;justify-content:flex-start;padding-left:4px;box-sizing:border-box"><span style="position:relative;top:2px">序号</span></div><div class="hd" style="left:180px;width:99px"><span>物料代码</span></div><div class="hd" style="left:280px;width:99px"><span>物料名称</span></div><div class="hd" style="left:380px;width:99px"><span>物料型号</span></div><div class="hd" style="left:480px;width:49px"><span>单位<br>名称</span></div><div class="hd" style="left:530px;width:55px"><span>源单类<br>型</span></div><div class="hd" style="left:586px;width:95px"><span>源单单号</span></div><div class="hd" style="left:682px;width:95px"><span>源单公司单<br>号</span></div><div class="hd" style="left:778px;width:95px"><span>订单编号</span></div><div class="hd" style="left:874px;width:95px"><span>订单公司单<br>号</span></div><div class="hd" style="left:970px;width:93px"><span>单据日期</span></div><div class="hd" style="left:1064px;width:93px"><span>应结日期</span></div><div class="hd" style="left:1158px;width:43px"><span>源单<br>分录<br>号</span></div><div class="hd" style="left:1202px;width:63px"><span>数量</span></div><div class="hd" style="left:1266px;width:64px"><span>单价</span></div><div class="hd" style="left:1331px;width:89px"><span>原币单据金<br>额</span></div><div class="hd" style="left:1421px;width:58px"><span>预付比<br>例<span class="n">(%)</span></span></div><div class="hd" style="left:1480px;width:99px"><span>原币核销数量</span></div><div class="hd" style="left:1580px;width:100px"><span>原币核销金额</span></div><div class="hd" style="left:1681px;width:69px"><span>本币核销<br>金额</span></div><div class="hd" style="left:1751px;width:75px"><span>币别</span></div><div class="hd" style="left:1827px;width:57px;justify-content:flex-end"><span style="margin-right:-7px">汇率</span></div><div class="c" style="left:131px;top:442px;width:43px;height:25px;text-align:right;overflow:hidden"><span class="n" style="font-size:14px;line-height:15px;position:relative;top:5px">1</span></div><div class="c" style="left:131px;top:467px;width:43px;height:25px;text-align:right;overflow:hidden"><span class="n" style="font-size:14px;line-height:15px;position:relative;top:5px">2</span></div><div class="c" style="left:131px;top:492px;width:43px;height:25px;text-align:right;overflow:hidden"><span class="n" style="font-size:14px;line-height:15px;position:relative;top:5px">3</span></div><div class="c" style="left:131px;top:517px;width:43px;height:25px;text-align:right;overflow:hidden"><span class="n" style="font-size:14px;line-height:15px;position:relative;top:5px">4</span></div><div class="c" style="left:131px;top:542px;width:43px;height:25px;text-align:right;overflow:hidden"><span class="n" style="font-size:14px;line-height:15px;position:relative;top:5px">5</span></div><div class="c" style="left:131px;top:567px;width:43px;height:25px;text-align:right;overflow:hidden"><span class="n" style="font-size:14px;line-height:15px;position:relative;top:5px">6</span></div><div class="c" style="left:131px;top:592px;width:43px;height:25px;text-align:right;overflow:hidden"><span class="n" style="font-size:14px;line-height:15px;position:relative;top:5px">7</span></div><div class="c" style="left:131px;top:617px;width:43px;height:25px;text-align:right;overflow:hidden"><span class="n" style="font-size:14px;line-height:15px;position:relative;top:5px">8</span></div><div class="c" style="left:131px;top:642px;width:43px;height:25px;text-align:right;overflow:hidden"><span class="n" style="font-size:14px;line-height:15px;position:relative;top:5px">9</span></div><div class="c" style="left:131px;top:667px;width:43px;height:25px;text-align:right;overflow:hidden"><span class="n" style="font-size:14px;line-height:15px;position:relative;top:5px">10</span></div><div class="c" style="left:131px;top:692px;width:43px;height:25px;text-align:right;overflow:hidden"><span class="n" style="font-size:14px;line-height:15px;position:relative;top:5px">11</span></div><div class="c" style="left:131px;top:717px;width:43px;height:25px;text-align:right;overflow:hidden"><span class="n" style="font-size:14px;line-height:15px;position:relative;top:5px">12</span></div><div class="c" style="left:131px;top:742px;width:43px;height:25px;text-align:right;overflow:hidden"><span class="n" style="font-size:14px;line-height:15px;position:relative;top:5px">13</span></div><div class="c" style="left:131px;top:767px;width:43px;height:25px;text-align:right;overflow:hidden"><span class="n" style="font-size:14px;line-height:15px;position:relative;top:5px">14</span></div><div class="c" style="left:131px;top:792px;width:43px;height:25px;text-align:right;overflow:hidden"><span class="n" style="font-size:14px;line-height:15px;position:relative;top:5px">15</span></div><div class="c" style="left:131px;top:817px;width:43px;height:20px;text-align:right;overflow:hidden"><span class="n" style="font-size:14px;line-height:15px;position:relative;top:5px">16</span></div><svg class="a" style="left:136px;top:448px" width="8" height="13" viewBox="0 0 8 13"><path d="M0.5 0.5V12.5L7.5 6.5Z" fill="#3c3c3c" stroke="#eef" stroke-width="0.5"/></svg><div class="c" style="left:182px;top:446px;"><span class="n">0002</span></div><div class="c" style="left:282px;top:446px;">材料<span class="n">1</span></div><div class="c" style="left:482px;top:446px;"><span class="n">PCS</span></div><div class="c" style="left:532px;top:446px;"><span class="n">1</span></div><div class="c" style="left:588px;top:446px;"><span class="n">WIN000001</span></div><div class="c" style="left:780px;top:446px;"><span class="n">POORD000001</span></div><div class="c" style="left:972px;top:446px;"><span class="n">2023-08-07</span></div><div class="c" style="left:1066px;top:446px;"><span class="n">2023-09-30</span></div><div class="c" style="left:1158px;top:446px;width:41px;text-align:right;"><span class="n">1</span></div><div class="c" style="left:1202px;top:446px;width:61px;text-align:right;"><span class="n">1,000.0</span></div><div class="c" style="left:1266px;top:446px;width:62px;text-align:right;"><span class="n">5.0000</span></div><div class="c" style="left:1331px;top:446px;width:87px;text-align:right;"><span class="n">5,000.00</span></div><div class="c" style="left:1421px;top:446px;width:56px;text-align:right;"><span class="n">0.00</span></div><div class="c" style="left:1480px;top:446px;width:97px;text-align:right;"><span class="n">1000.00</span></div><div class="c" style="left:1580px;top:446px;width:98px;text-align:right;"><span class="n">5,000.00</span></div><div class="c" style="left:1681px;top:446px;width:67px;text-align:right;"><span class="n">5,000.00</span></div><div class="c" style="left:1753px;top:446px;">人民币</div><div class="c" style="left:1827px;top:446px;width:57px;text-align:right;"><span class="n">1</span></div><div class="c" style="left:182px;top:471px;"><span class="n">0003</span></div><div class="c" style="left:282px;top:471px;">材料<span class="n">2</span></div><div class="c" style="left:482px;top:471px;"><span class="n">PCS</span></div><div class="c" style="left:532px;top:471px;"><span class="n">1</span></div><div class="c" style="left:588px;top:471px;"><span class="n">WIN000001</span></div><div class="c" style="left:780px;top:471px;"><span class="n">POORD000001</span></div><div class="c" style="left:972px;top:471px;"><span class="n">2023-08-07</span></div><div class="c" style="left:1066px;top:471px;"><span class="n">2023-09-30</span></div><div class="c" style="left:1158px;top:471px;width:41px;text-align:right;"><span class="n">2</span></div><div class="c" style="left:1202px;top:471px;width:61px;text-align:right;"><span class="n">1,000.0</span></div><div class="c" style="left:1266px;top:471px;width:62px;text-align:right;"><span class="n">6.0000</span></div><div class="c" style="left:1331px;top:471px;width:87px;text-align:right;"><span class="n">6,000.00</span></div><div class="c" style="left:1421px;top:471px;width:56px;text-align:right;"><span class="n">0.00</span></div><div class="c" style="left:1480px;top:471px;width:97px;text-align:right;"><span class="n">1000.00</span></div><div class="c" style="left:1580px;top:471px;width:98px;text-align:right;"><span class="n">6,000.00</span></div><div class="c" style="left:1681px;top:471px;width:67px;text-align:right;"><span class="n">6,000.00</span></div><div class="c" style="left:1753px;top:471px;">人民币</div><div class="c" style="left:1827px;top:471px;width:57px;text-align:right;"><span class="n">1</span></div><div class="a" style="left:130px;top:838px;width:1754px;height:19px;background:#ffffb0"></div><div class="a" style="left:130px;top:838px;width:50px;height:19px;background:#fce98c"></div><div class="a" style="left:180px;top:838px;width:100px;height:19px;background:#ffff00"></div><div class="hl" style="left:130px;top:836px;width:1754px;background:#a9a9a9"></div><div class="hl" style="left:130px;top:857px;width:1754px;background:#b4b4b4"></div><div class="vl" style="left:179px;top:837px;height:20px"></div><div class="vl" style="left:279px;top:837px;height:20px"></div><div class="vl" style="left:379px;top:837px;height:20px"></div><div class="vl" style="left:479px;top:837px;height:20px"></div><div class="vl" style="left:529px;top:837px;height:20px"></div><div class="vl" style="left:585px;top:837px;height:20px"></div><div class="vl" style="left:681px;top:837px;height:20px"></div><div class="vl" style="left:777px;top:837px;height:20px"></div><div class="vl" style="left:873px;top:837px;height:20px"></div><div class="vl" style="left:969px;top:837px;height:20px"></div><div class="vl" style="left:1063px;top:837px;height:20px"></div><div class="vl" style="left:1157px;top:837px;height:20px"></div><div class="vl" style="left:1201px;top:837px;height:20px"></div><div class="vl" style="left:1265px;top:837px;height:20px"></div><div class="vl" style="left:1330px;top:837px;height:20px"></div><div class="vl" style="left:1420px;top:837px;height:20px"></div><div class="vl" style="left:1479px;top:837px;height:20px"></div><div class="vl" style="left:1579px;top:837px;height:20px"></div><div class="vl" style="left:1680px;top:837px;height:20px"></div><div class="vl" style="left:1750px;top:837px;height:20px"></div><div class="vl" style="left:1826px;top:837px;height:20px"></div><div class="c" style="left:141px;top:838.5px;font-weight:bold;font-size:16px;line-height:16px">合计</div><div class="c" style="left:1202px;top:838px;width:62px;text-align:right;font-weight:bold;"><span class="n">2,000.0</span></div><div class="c" style="left:1266px;top:838px;width:63px;text-align:right;font-weight:bold;"><span class="n">11.0000</span></div><div class="c" style="left:1331px;top:838px;width:88px;text-align:right;font-weight:bold;"><span class="n">11,000.00</span></div><div class="c" style="left:1421px;top:838px;width:57px;text-align:right;font-weight:bold;"><span class="n">0.00</span></div><div class="c" style="left:1480px;top:838px;width:98px;text-align:right;font-weight:bold;"><span class="n">2000.00</span></div><div class="c" style="left:1580px;top:838px;width:99px;text-align:right;font-weight:bold;"><span class="n">11,000.00</span></div><div class="c" style="left:1682px;top:838px;font-weight:bold;"><span class="n">11,000.0</span></div><div class="a" style="left:129px;top:858px;width:1776px;height:19px;background:#f0f0f0"></div><div class="a" style="left:150px;top:858px;width:1321px;height:19px;background:#cdcdcd"></div><svg class="a" style="left:134px;top:862px" width="8" height="11" viewBox="0 0 8 11"><path d="M6.5 1L2 5.5L6.5 10" stroke="#555" stroke-width="2" fill="none"/></svg><svg class="a" style="left:1869px;top:862px" width="8" height="11" viewBox="0 0 8 11"><path d="M1.5 1L6 5.5L1.5 10" stroke="#555" stroke-width="2" fill="none"/></svg><div class="a" style="left:1885px;top:402px;width:20px;height:456px;background:#f0f0f0"></div><div class="a" style="left:1885px;top:423px;width:19px;height:21px;background:#cdcdcd"></div><svg class="a" style="left:1889px;top:408px" width="11" height="9" viewBox="0 0 11 9"><path d="M1 7.5L5.500 2.500L10 7.500" stroke="#606060" stroke-width="2.400" fill="none"/></svg><svg class="a" style="left:1889px;top:842px" width="11" height="8" viewBox="0 0 11 8"><path d="M1 1.5L5.5 6L10 1.5" stroke="#555" stroke-width="2" fill="none"/></svg><div class="a" style="left:115px;top:972px;width:1803px;height:28px;background:linear-gradient(180deg,#bce0f7 0,#bfe1f8 25%,#d8ecfa 70%,#e6f2fb 100%)"></div><div class="a" style="left:116px;top:972px;width:203px;height:1px;background:#a8a8a8"></div><div class="a" style="left:116px;top:972px;width:1px;height:27px;background:#a8a8a8"></div><div class="a" style="left:116px;top:998px;width:204px;height:2px;background:#f8fcff"></div><div class="a" style="left:318px;top:973px;width:2px;height:27px;background:#f8fcff"></div><div class="a" style="left:321px;top:972px;width:1576px;height:1px;background:#a8a8a8"></div><div class="a" style="left:321px;top:972px;width:1px;height:27px;background:#a8a8a8"></div><div class="a" style="left:321px;top:998px;width:1578px;height:2px;background:#f8fcff"></div><div class="a" style="left:1897px;top:973px;width:2px;height:27px;background:#f8fcff"></div><div class="a" style="left:1899px;top:972px;width:19px;height:1px;background:#7f9db9"></div><div class="a" style="left:112px;top:1000px;width:1806px;height:2px;background:#eaeaea"></div><div class="a" style="left:112px;top:1002px;width:1806px;height:2px;background:linear-gradient(180deg,#7f9db9 0,#7f9db9 50%,#a6c6e2 51%,#a6c6e2 100%)"></div><div class="a" style="left:112px;top:1004px;width:1806px;height:26px;background:linear-gradient(180deg,#b9dff7 0,#bfe1f8 25%,#d6ebfa 70%,#e3f1fb 100%)"></div><div class="t" style="left:118px;top:979px">查看</div><div class="t" style="left:323px;top:979px">表头原币金额<span class="n">:</span><span class="n"> 11000 </span>，表体原币金额<span class="n">:</span><span class="n"> 11000 </span>，原币差额<span class="n">:</span><span class="n"> 0</span></div><div class="t" style="left:765px;top:979px">表头本币金额<span class="n">:</span><span class="n"> 11000 </span>，表体本币金额<span class="n">:</span><span class="n"> 11000 </span>，本币差额<span class="n">:</span><span class="n"> 0</span></div><div class="a" style="left:529px;top:1007px;width:1px;height:20px;background:#8e9aa6"></div><div class="a" style="left:723px;top:1007px;width:1px;height:20px;background:#8e9aa6"></div><div class="a" style="left:879px;top:1007px;width:1px;height:20px;background:#8e9aa6"></div><div class="a" style="left:983px;top:1007px;width:1px;height:20px;background:#8e9aa6"></div><div class="a" style="left:1072px;top:1007px;width:1px;height:20px;background:#8e9aa6"></div><div class="a" style="left:1486px;top:1007px;width:1px;height:20px;background:#8e9aa6"></div><div class="t" style="left:116px;top:1008px"><span class="n">V12</span>就绪（软件最近更新时间：<span class="n">2023-08-07 16:03:16</span>）</div><div class="t" style="left:546px;top:1008px">服务器地址<span class="n">:</span><span class="n"> 127.0.0.1</span></div><div class="t" style="left:739px;top:1008px">账套名称<span class="n">:</span> 集团版</div><div class="t" style="left:895px;top:1008px"><span class="n">2023</span>年<span class="n">8</span>期</div><div class="t" style="left:999px;top:1008px"><span class="n">manager</span></div><div class="t" style="left:1489px;top:1008px">未设置自动账套备份，请打开系统参数，搜索<span style="display:inline-block;width:15px;text-align:right">‘</span>备份<span style="display:inline-block;width:15px;text-align:left">’</span>。</div><div class="a" style="left:877px;top:454px;width:173px;height:122px;background:#fff"></div><div class="a" style="left:877px;top:576px;width:173px;height:65px;background:#f0f0f0"></div><div class="a" style="left:876px;top:453px;width:174px;height:1px;background:#555"></div><div class="a" style="left:876px;top:453px;width:1px;height:188px;background:#666"></div><div class="a" style="left:1049px;top:453px;width:1px;height:33px;background:#555"></div><div class="t" style="left:881px;top:462px;font-size:15px">信息提示</div><svg class="a" style="left:1021px;top:463px" width="14" height="14" viewBox="0 0 14 14"><path d="M1 1L13 13M13 1L1 13" stroke="#111" stroke-width="1.3" fill="none"/></svg><div class="t" style="left:891px;top:524px;font-size:13.5px">单据保存成功。</div><div class="a" style="left:918px;top:592px;width:104px;height:29px;background:#e1e1e1;border:2px solid #0078d7"></div><div class="a" style="left:921px;top:595px;width:100px;height:25px;border:1px dotted #111;box-sizing:border-box"></div><div class="t" style="left:958px;top:601px;font-size:13.5px">确定</div></body></html>
